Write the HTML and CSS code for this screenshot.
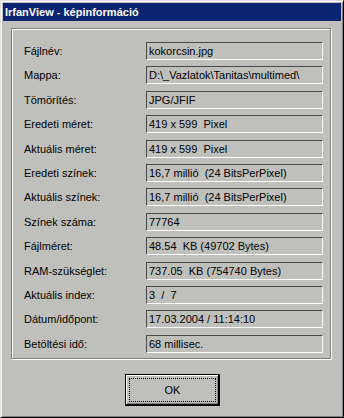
FILE: index.html
```html
<!DOCTYPE html>
<html lang="hu">
<head>
  <meta charset="UTF-8">
  <title>IrfanView - képinformáció</title>
  <link rel="stylesheet" href="styles.css">
</head>
<body>
  <div class="ablak">
    <div class="cimsor">IrfanView - képinformáció</div>

    <div class="tartalom">
      <div class="csoport">
        <div class="sor"><span class="cimke">Fájlnév:</span><span class="mezo">kokorcsin.jpg</span></div>
        <div class="sor"><span class="cimke">Mappa:</span><span class="mezo">D:\_Vazlatok\Tanitas\multimed\</span></div>
        <div class="sor"><span class="cimke">Tömörítés:</span><span class="mezo">JPG/JFIF</span></div>
        <div class="sor"><span class="cimke">Eredeti méret:</span><span class="mezo">419 x 599&nbsp; Pixel</span></div>
        <div class="sor"><span class="cimke">Aktuális méret:</span><span class="mezo">419 x 599&nbsp; Pixel</span></div>
        <div class="sor"><span class="cimke">Eredeti színek:</span><span class="mezo">16,7 millió&nbsp; (24 BitsPerPixel)</span></div>
        <div class="sor"><span class="cimke">Aktuális színek:</span><span class="mezo">16,7 millió&nbsp; (24 BitsPerPixel)</span></div>
        <div class="sor"><span class="cimke">Színek száma:</span><span class="mezo">77764</span></div>
        <div class="sor"><span class="cimke">Fájlméret:</span><span class="mezo">48.54&nbsp; KB (49702 Bytes)</span></div>
        <div class="sor"><span class="cimke">RAM-szükséglet:</span><span class="mezo">737.05&nbsp; KB (754740 Bytes)</span></div>
        <div class="sor"><span class="cimke">Aktuális index:</span><span class="mezo">3&nbsp; /&nbsp; 7</span></div>
        <div class="sor"><span class="cimke">Dátum/időpont:</span><span class="mezo">17.03.2004 / 11:14:10</span></div>
        <div class="sor"><span class="cimke">Betöltési idő:</span><span class="mezo">68 millisec.</span></div>
      </div>

      <div class="gombsor">
        <button class="gomb" type="button"><span class="fokusz">OK</span></button>
      </div>
    </div>
  </div>
</body>
</html>
```

FILE: styles.css
```css
body {
  margin: 0;
  background-color: #bfc0bc;
  font-family: "Liberation Sans", Arial, sans-serif;
  font-size: 11px;
  color: #000;
}

.ablak {
  width: 344px;
  height: 418px;
  box-sizing: border-box;
  border: 1px solid;
  border-color: #dfdfdf #000 #000 #dfdfdf;
  box-shadow: inset 1px 1px 0 #fff, inset -1px -1px 0 #808080;
  padding: 2px;
  background-color: #bfc0bc;
}

.cimsor {
  height: 18px;
  line-height: 18px;
  padding-left: 2px;
  background-color: #0a2470;
  color: #fff;
  font-weight: bold;
}

.tartalom {
  padding: 7px 0 0 8px;
}

.csoport {
  width: 320px;
  height: 331px;
  box-sizing: border-box;
  border: 1px solid #808080;
  box-shadow: inset 1px 1px 0 #fff, 1px 1px 0 #fff;
  padding: 13px 0 0 12px;
}

.sor {
  display: grid;
  grid-template-columns: 122px 177px;
  height: 24.4px;
}

.cimke {
  line-height: 18px;
  white-space: nowrap;
}

.mezo {
  height: 18px;
  box-sizing: border-box;
  border-top: 1px solid #4a4a4a;
  border-left: 1px solid #4a4a4a;
  border-right: 1px solid #fff;
  border-bottom: 1px solid #fff;
  padding-left: 2px;
  line-height: 16px;
  white-space: nowrap;
  overflow: hidden;
}

.gombsor {
  display: flex;
  padding: 15px 0 0 114px;
}

.gomb {
  width: 95px;
  height: 32px;
  box-sizing: border-box;
  border: 1px solid #000;
  box-shadow: inset -1px -1px 0 #000, inset 1px 1px 0 #fff, inset -2px -2px 0 #808080;
  padding: 3px;
  background-color: #bfc0bc;
  font-family: inherit;
  font-size: 11px;
  color: #000;
}

.fokusz {
  display: block;
  height: 100%;
  box-sizing: border-box;
  border: 1px dotted #000;
  line-height: 22px;
  text-align: center;
}
```
